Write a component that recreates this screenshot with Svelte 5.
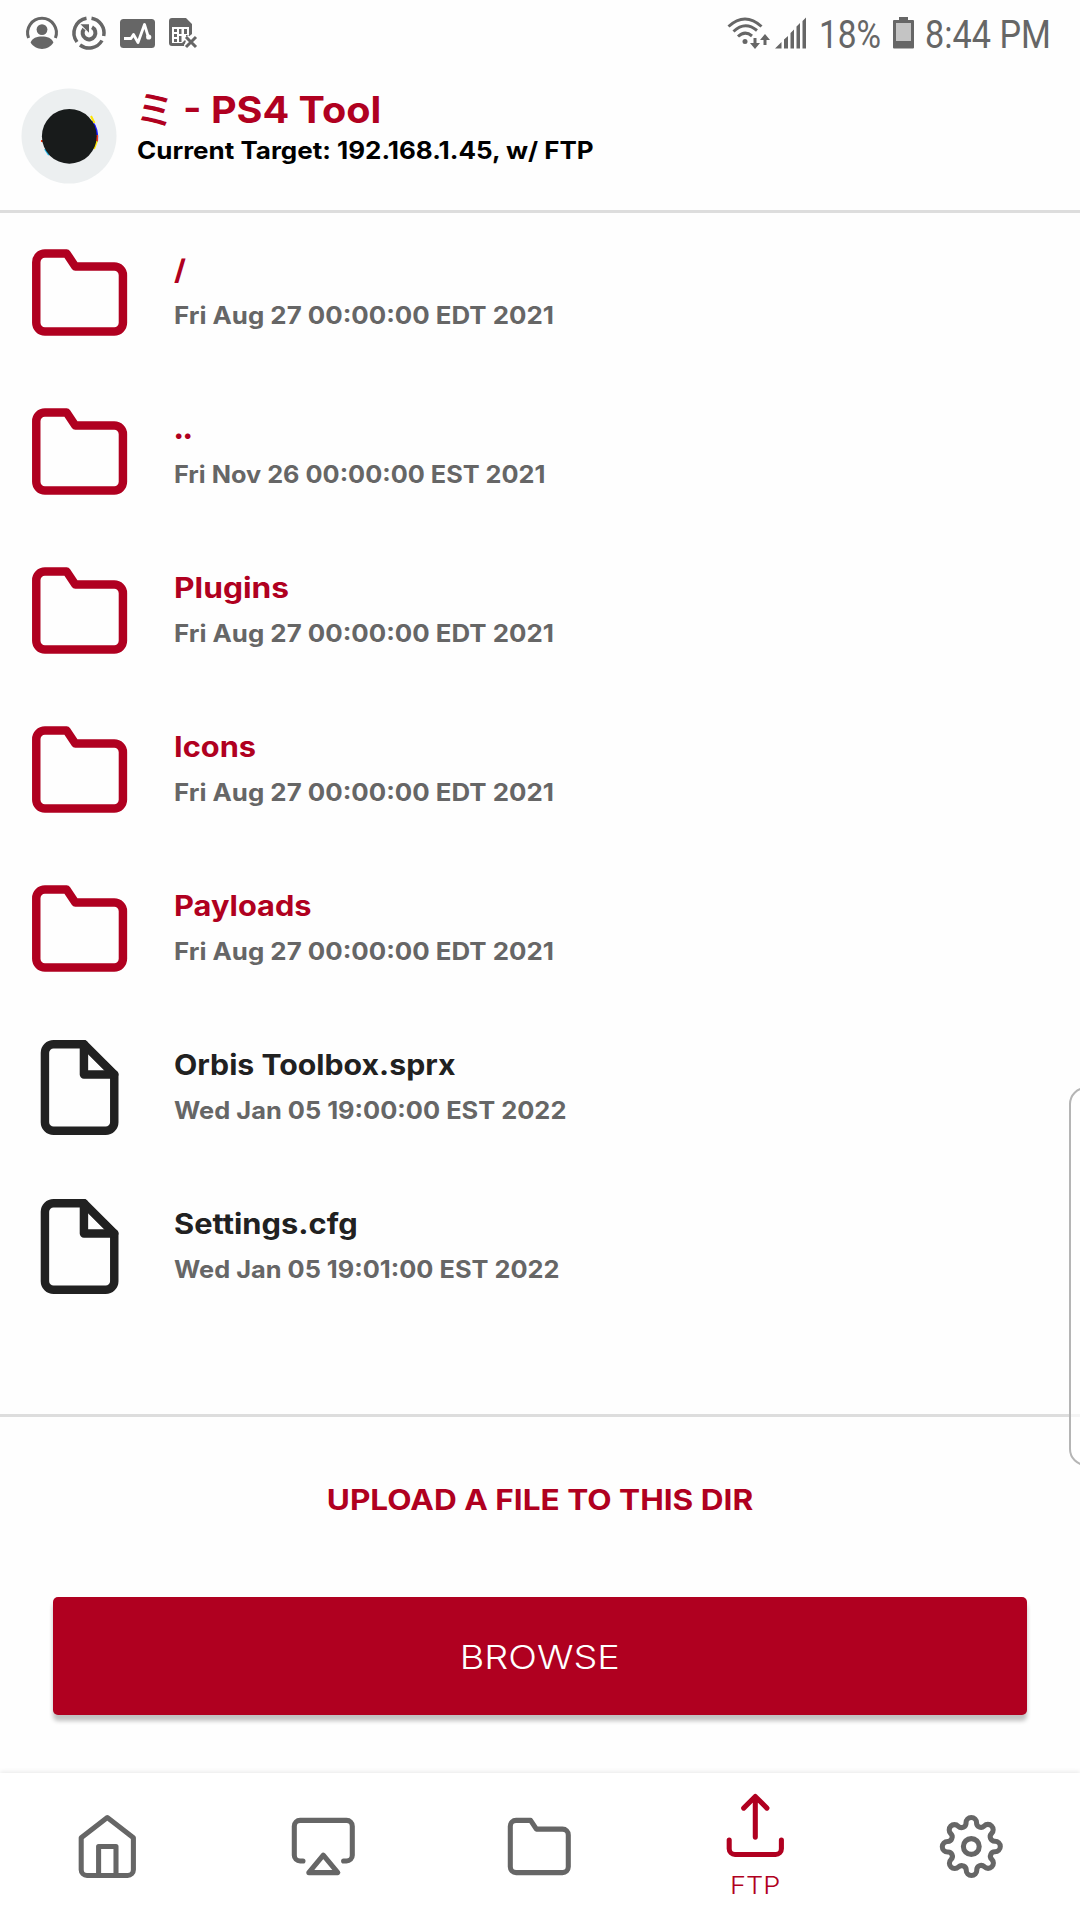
<script>
  const entries = [
    { name: '/', stretch: 1.1, date: 'Fri Aug 27 00:00:00 EDT 2021', dateStretch: 1.077, folder: true },
    { name: '..', stretch: 1, date: 'Fri Nov 26 00:00:00 EST 2021', dateStretch: 1.054, folder: true },
    { name: 'Plugins', stretch: 1.133, date: 'Fri Aug 27 00:00:00 EDT 2021', dateStretch: 1.077, folder: true },
    { name: 'Icons', stretch: 1.1, date: 'Fri Aug 27 00:00:00 EDT 2021', dateStretch: 1.077, folder: true },
    { name: 'Payloads', stretch: 1.1, date: 'Fri Aug 27 00:00:00 EDT 2021', dateStretch: 1.077, folder: true },
    { name: 'Orbis Toolbox.sprx', stretch: 1.08, date: 'Wed Jan 05 19:00:00 EST 2022', dateStretch: 1.059, folder: false },
    { name: 'Settings.cfg', stretch: 1.1, date: 'Wed Jan 05 19:01:00 EST 2022', dateStretch: 1.057, folder: false }
  ];
  const tabs = ['home', 'airplay', 'folder', 'upload', 'settings'];
</script>

{#snippet icon(kind)}
  <svg class="icon" viewBox="0 0 24 24">
    {#if kind === 'folder'}
      <path d="M22 19a2 2 0 0 1-2 2H4a2 2 0 0 1-2-2V5a2 2 0 0 1 2-2h5l2 3h9a2 2 0 0 1 2 2z" />
    {:else if kind === 'file'}
      <path d="M13 2H6a2 2 0 0 0-2 2v16a2 2 0 0 0 2 2h12a2 2 0 0 0 2-2V9z" />
      <path d="M13 2v7h7" />
    {:else if kind === 'home'}
      <path d="M3 9l9-7 9 7v11a2 2 0 0 1-2 2H5a2 2 0 0 1-2-2z" />
      <path d="M9 22V12h6v10" />
    {:else if kind === 'airplay'}
      <path d="M5 17H4a2 2 0 0 1-2-2V5a2 2 0 0 1 2-2h16a2 2 0 0 1 2 2v10a2 2 0 0 1-2 2h-1" />
      <path d="M12 15l5 6H7z" />
    {:else if kind === 'upload'}
      <path d="M3 17v3a2 2 0 0 0 2 2h14a2 2 0 0 0 2-2v-3M16 6l-4-4-4 4M12 2v14" />
    {:else}
      <g class="gear" transform="translate(12 12) scale(.909) translate(-12 -12)">
        <circle cx="12" cy="12" r="3" />
        <path d="M19.4 15a1.65 1.65 0 0 0 .33 1.82l.06.06a2 2 0 0 1 0 2.83 2 2 0 0 1-2.83 0l-.06-.06a1.65 1.65 0 0 0-1.82-.33 1.65 1.65 0 0 0-1 1.51V21a2 2 0 0 1-2 2 2 2 0 0 1-2-2v-.09A1.65 1.65 0 0 0 9 19.4a1.65 1.65 0 0 0-1.82.33l-.06.06a2 2 0 0 1-2.83 0 2 2 0 0 1 0-2.83l.06-.06a1.65 1.65 0 0 0 .33-1.82 1.65 1.65 0 0 0-1.51-1H3a2 2 0 0 1-2-2 2 2 0 0 1 2-2h.09A1.65 1.65 0 0 0 4.6 9a1.65 1.65 0 0 0-.33-1.82l-.06-.06a2 2 0 0 1 0-2.83 2 2 0 0 1 2.83 0l.06.06a1.65 1.65 0 0 0 1.82.33H9a1.65 1.65 0 0 0 1-1.51V3a2 2 0 0 1 2-2 2 2 0 0 1 2 2v.09a1.65 1.65 0 0 0 1 1.51 1.65 1.65 0 0 0 1.82-.33l.06-.06a2 2 0 0 1 2.83 0 2 2 0 0 1 0 2.83l-.06.06a1.65 1.65 0 0 0-.33 1.82V9a1.65 1.65 0 0 0 1.51 1H21a2 2 0 0 1 2 2 2 2 0 0 1-2 2h-.09a1.65 1.65 0 0 0-1.51 1z" />
      </g>
    {/if}
  </svg>
{/snippet}

<div class="screen">
  <div class="status">
    <div class="notices">
      <svg width="32" height="32" viewBox="0 0 32 32">
        <path class="line" d="M2.6 21A14.4 14.4 0 1 1 29.4 21" />
        <circle cx="16" cy="12.6" r="5.4" />
        <path d="M4.6 25.5C6 21 11 19.4 16 19.4s10 1.600 11.400 6.100C25 29.500 20.500 31.900 16 31.900S7 29.500 4.600 25.500z" />
      </svg>
      <svg width="34" height="34" viewBox="0 0 34 34">
        <path class="line ring" d="M14.500 2.200A15 15 0 0 0 5 26M19.500 2.200A15 15 0 0 1 31.700 20M30 24.500A15 15 0 0 1 8 29" />
        <path class="line thick" d="M20 11.300A6.400 6.400 0 1 1 12 13" />
        <path d="M8.500 8.300h8.500v8.500z" />
      </svg>
      <svg width="35" height="29" viewBox="0 0 35 29">
        <rect width="35" height="29" rx="3.500" />
        <path class="cut" d="M4 19.500h7l2.500-4 4.500 8L24.500 5.500l4 13" />
        <circle class="white" cx="28.700" cy="18" r="2.600" />
      </svg>
      <svg width="28" height="31" viewBox="0 0 28 31">
        <path d="M3 0h14l6 6v10l-5 4-3 8H3a3 3 0 0 1-3-3V3a3 3 0 0 1 3-3z" />
        <path class="white" d="M3 9h17v8h-3v4l-4 4H3z" />
        <path d="M5 11h3v3H5zM5 16h3v3H5zM5 21h3v3H5zM10 11h2.500v5H10zM15 11h3v5h-3zM10 18h2.500v6H10z" />
        <path class="halo" d="M17 19l10 10M27 19L17 29" />
        <path class="line" d="M17 19l10 10M27 19L17 29" />
      </svg>
    </div>
    <div class="system">
      <svg class="wifi" width="43" height="33" viewBox="0 0 43 33">
        <path class="line" d="M1.500 9.500Q18-5.500 34.500 9.500M6.500 14.500Q18 3.500 30 13.500M11 19.500Q18 13 25 19" />
        <circle cx="18" cy="24.500" r="2.500" />
        <path class="line" d="M28 21v8M38 28v-8" />
        <path d="M23 26h10l-5 6zM33 23h10l-5-6z" />
      </svg>
      <svg class="signal" width="32" height="32" viewBox="0 0 32 32">
        <path d="M0 31.500L6.500 25v6.500zM9 22.500l4-3.500v12.500H9zM15.500 16l3.500-3.500v19h-3.500zM21.500 9.500L25 6v25.500h-3.500zM27.500 4L31 .5v31h-3.500z" />
      </svg>
      <span class="percent">18%</span>
      <svg class="battery" width="21" height="32" viewBox="0 0 21 32">
        <path d="M6 0h9v3h5a1 1 0 0 1 1 1v26.500a1 1 0 0 1-1 1H1a1 1 0 0 1-1-1V4a1 1 0 0 1 1-1h5z" />
        <path class="empty" d="M3 6h15v18H3z" />
      </svg>
      <span class="clock">8:44 PM</span>
    </div>
  </div>

  <header>
    <svg class="avatar" viewBox="0 0 96 96">
      <circle class="disc" cx="48" cy="48" r="47.500" />
      <path class="blue" d="M70.500 33q7 8 5.500 21" />
      <path class="yellow" d="M70 28l3.500 7M76 53l-3 8" />
      <path class="red" d="M76 47v6M21 52v2" />
      <path class="cyan" d="M24 61l4 6" />
      <circle class="core" cx="48.300" cy="48.300" r="27.400" />
    </svg>
    <div class="heading">
      <h1><span class="mi">ミ</span><span class="title">- PS4 Tool</span></h1>
      <p>Current Target: 192.168.1.45, w/ FTP</p>
    </div>
  </header>

  <main>
    {#each entries as entry}
      <div class="row" class:folder={entry.folder}>
        {@render icon(entry.folder ? 'folder' : 'file')}
        <div class="meta">
          <div class="name" class:parent={entry.name === '..'} style:--stretch={entry.stretch}>{entry.name}</div>
          <div class="date" style:--stretch={entry.dateStretch}>{entry.date}</div>
        </div>
      </div>
    {/each}
  </main>

  <section>
    <h2><span>UPLOAD A FILE TO THIS DIR</span></h2>
    <button><span>BROWSE</span></button>
  </section>

  <nav>
    {#each tabs as tab}
      <div class="tab" class:active={tab === 'upload'}>
        {@render icon(tab)}
        {#if tab === 'upload'}<span class="label">FTP</span>{/if}
      </div>
    {/each}
  </nav>

  <div class="edge-handle"></div>
</div>

<style>
  :global(body) { margin: 0; background: #fefefe; }
  .screen {
    position: relative;
    width: 1080px;
    height: 1920px;
    overflow: hidden;
    display: flex;
    flex-direction: column;
    background: #fefefe;
    font-family: Inter, 'Noto Sans CJK JP', sans-serif;
  }
  h1, h2, p { margin: 0; }
  .status {
    height: 66px;
    flex: none;
    display: flex;
    justify-content: space-between;
    box-sizing: border-box;
    padding: 0 30px 0 26px;
    color: #666;
  }
  .notices, .system { display: flex; align-items: center; }
  .notices { gap: 14px; }
  .status svg { fill: #666; flex: none; overflow: visible; }
  .status .line { fill: none; stroke: #666; stroke-width: 3; }
  .status .ring { stroke-width: 3.500; }
  .status .thick { stroke-width: 4; }
  .status .cut { fill: none; stroke: #fff; stroke-width: 2.800; stroke-linejoin: round; }
  .status .halo { fill: none; stroke: #fff; stroke-width: 6; }
  .status .white { fill: #fff; }
  .status .empty { fill: #c4c4c4; }
  .signal { margin-left: 5px; }
  .percent, .clock {
    font: 400 38px/66px Roboto, sans-serif;
    padding-top: 4px;
    transform-origin: left;
    white-space: nowrap;
  }
  .percent { width: 61px; margin-left: 12px; transform: scaleX(.880); }
  .clock { width: 125px; margin-left: 11px; transform: scaleX(.900); }
  .battery { margin-left: 13px; }

  header {
    height: 144px;
    flex: none;
    display: flex;
    border-bottom: 3px solid #ddd;
    padding-left: 20.500px;
  }
  .avatar { width: 96px; height: 96px; margin-top: 22px; }
  .disc { fill: #eceff0; }
  .core { fill: #181b1b; }
  .avatar path { fill: none; stroke-width: 2; }
  .avatar .blue { stroke: #1718ff; }
  .avatar .yellow { stroke: #ffe600; }
  .avatar .red { stroke: #f33716; }
  .avatar .cyan { stroke: #1fb6e8; }
  .heading { margin-left: 20.500px; padding-top: 20px; }
  h1 {
    display: flex;
    align-items: center;
    height: 48px;
    color: #b00020;
    font-size: 37px;
    line-height: 48px;
    font-weight: 700;
  }
  .mi { width: 45.500px; font-size: 40px; font-weight: 500; text-indent: -2px; }
  .title { transform: scaleX(1.070); transform-origin: left; }
  p {
    font-size: 24px;
    line-height: 34px;
    font-weight: 700;
    color: #000;
    white-space: nowrap;
    transform: scaleX(1.082);
    transform-origin: left;
  }

  main { flex: none; height: 1201px; border-bottom: 3px solid #ddd; }
  .row {
    height: 159px;
    display: flex;
    align-items: center;
    padding-left: 27px;
    gap: 42.500px;
    color: #212121;
  }
  .row.folder { color: #b00020; }
  .icon {
    width: 104px;
    height: 104px;
    flex: none;
    fill: none;
    stroke: currentColor;
    stroke-width: 1.950;
    stroke-linecap: round;
    stroke-linejoin: round;
    transform: translate(.600px, -.500px);
  }
  .name, .date {
    line-height: 45px;
    font-weight: 700;
    white-space: nowrap;
    transform: scaleX(var(--stretch));
    transform-origin: left;
  }
  .name { font-size: 28px; }
  .name.parent { font-weight: 900; letter-spacing: -1.500px; }
  .date { font-size: 24px; color: #666; }

  section {
    flex: 1;
    display: flex;
    flex-direction: column;
    padding: 0 53px;
  }
  h2 {
    height: 180px;
    line-height: 166px;
    text-align: center;
    color: #b00020;
    font-size: 28px;
    font-weight: 700;
    transform: scaleX(1.128);
  }
  button {
    height: 118px;
    border: 0;
    border-radius: 5px;
    background: #b00020;
    color: #fff;
    font: 300 32px/118px Inter, sans-serif;
    padding: 2px 0 0;
    box-shadow: 0 6px 4px rgba(0, 0, 0, .240);
  }
  button span { display: inline-block; transform: scaleX(1.180); }
  nav {
    height: 147px;
    flex: none;
    display: flex;
    background: #fff;
    box-shadow: 0 -1px 5px rgba(0, 0, 0, .090);
  }
  .tab {
    flex: 1;
    display: flex;
    flex-direction: column;
    align-items: center;
    justify-content: center;
    padding-right: 1px;
    color: #666;
  }
  nav .icon { width: 69.600px; height: 69.600px; stroke-width: 1.750; transform: translate(-.500px, -.300px); }
  .gear { stroke-width: 1.930; }
  .tab.active { color: #b00020; }
  .label { font-size: 24px; line-height: 49px; height: 41px; font-weight: 300; transform: scaleX(1.130); }
  .edge-handle {
    position: absolute;
    left: 1069px;
    top: 1087px;
    width: 40px;
    height: 375px;
    border: 2px solid #b5b5b5;
    border-radius: 17px;
    background: rgba(255, 255, 255, .700);
  }
</style>
